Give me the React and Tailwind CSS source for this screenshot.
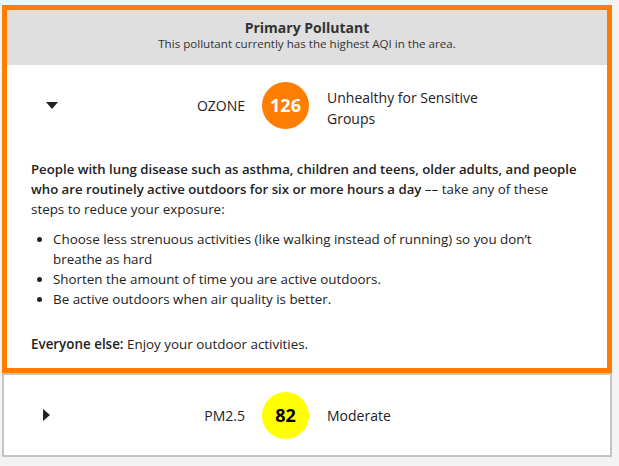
import React from "react";

function Down() {
  return (
    <svg width="12" height="7" viewBox="0 0 12 7" className="block">
      <path d="M0 0 H12 L6 7 Z" fill="#222" />
    </svg>
  );
}
function Right() {
  return (
    <svg width="7" height="12" viewBox="0 0 7 12" className="block">
      <path d="M0 0 V12 L7 6 Z" fill="#222" />
    </svg>
  );
}

export default function App() {
  return (
    <div
      className="min-h-[466px] w-[619px] bg-[#f3f3f3] pt-[5px] text-[#222]"
      style={{ fontFamily: '"Open Sans", "Noto Sans", sans-serif' }}
    >
      <div className="ml-[2px] w-[610px] border-[5px] border-[#ff7e00] bg-white">
        <div className="flex h-[55px] flex-col items-center justify-start bg-[#dfdfdf] pt-[9px]">
          <div className="text-[14px] font-bold leading-[17px] text-[#333]">Primary Pollutant</div>
          <div className="text-[11.6px] leading-[15px] text-[#333]">
            This pollutant currently has the highest AQI in the area.
          </div>
        </div>
        <div className="flex items-center pt-[16px]">
          <div className="flex w-[180px] justify-start pl-[39px]">
            <Down />
          </div>
          <div className="w-[58px] text-right text-[14px] text-[#222]">OZONE</div>
          <div className="ml-[17px] flex h-[47px] w-[47px] items-center justify-center rounded-full bg-[#ff7e00] text-[18px] font-bold text-white">
            126
          </div>
          <div className="ml-[18px] w-[180px] pt-[6px] text-[14px] leading-[21px] text-[#222]">
            Unhealthy for Sensitive Groups
          </div>
        </div>
        <div className="pb-[14px] pl-[24px] pr-[28px] pt-[30px] text-[13.4px] leading-[20px] text-[#222]">
          <p>
            <span className="text-[13.2px] font-semibold">
              People with lung disease such as asthma, children and teens, older adults, and people who are
              routinely active outdoors for six or more hours a day
            </span>{" "}
            –– take any of these steps to reduce your exposure:
          </p>
          <ul className="mt-[10px] list-disc pl-[22px]">
            <li>Choose less strenuous activities (like walking instead of running) so you don’t breathe as hard</li>
            <li>Shorten the amount of time you are active outdoors.</li>
            <li>Be active outdoors when air quality is better.</li>
          </ul>
          <p className="mt-[25px]">
            <span className="font-semibold">Everyone else:</span> Enjoy your outdoor activities.
          </p>
        </div>
      </div>
      <div className="ml-[2px] flex h-[84px] w-[610px] items-center border-2 border-[#c4c4c4] bg-white">
        <div className="flex w-[180px] justify-start pl-[39px]">
          <Right />
        </div>
        <div className="w-[61px] text-right text-[14px] text-[#222]">PM2.5</div>
        <div className="ml-[17px] flex h-[47px] w-[47px] items-center justify-center rounded-full bg-[#ffff00] text-[18px] font-bold text-black">
          82
        </div>
        <div className="ml-[18px] text-[14px] text-[#222]">Moderate</div>
      </div>
    </div>
  );
}
